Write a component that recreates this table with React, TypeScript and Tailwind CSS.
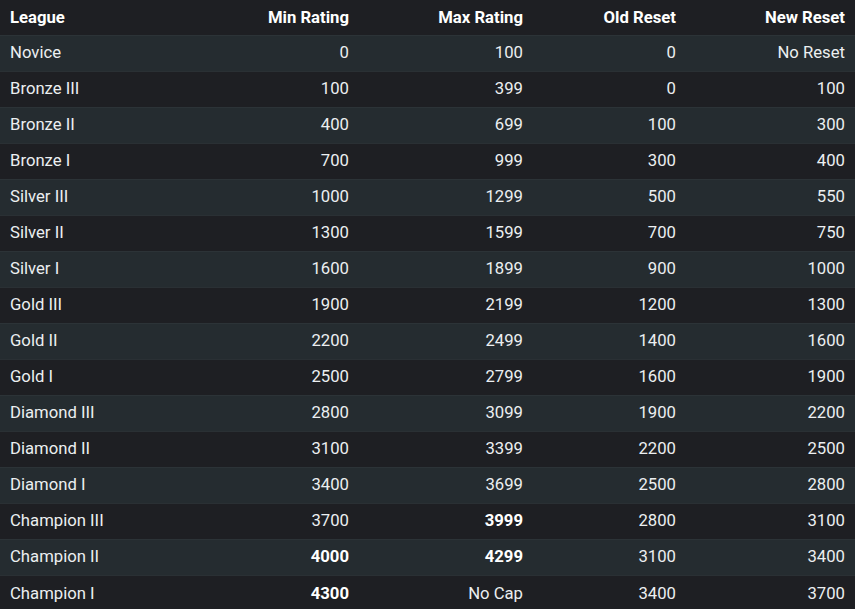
type Row = {
    league: string;
    min: string;
    max: string;
    oldReset: string;
    newReset: string;
    boldMin?: boolean;
    boldMax?: boolean;
};

const rows: Row[] = [
    { league: "Novice", min: "0", max: "100", oldReset: "0", newReset: "No Reset" },
    { league: "Bronze III", min: "100", max: "399", oldReset: "0", newReset: "100" },
    { league: "Bronze II", min: "400", max: "699", oldReset: "100", newReset: "300" },
    { league: "Bronze I", min: "700", max: "999", oldReset: "300", newReset: "400" },
    { league: "Silver III", min: "1000", max: "1299", oldReset: "500", newReset: "550" },
    { league: "Silver II", min: "1300", max: "1599", oldReset: "700", newReset: "750" },
    { league: "Silver I", min: "1600", max: "1899", oldReset: "900", newReset: "1000" },
    { league: "Gold III", min: "1900", max: "2199", oldReset: "1200", newReset: "1300" },
    { league: "Gold II", min: "2200", max: "2499", oldReset: "1400", newReset: "1600" },
    { league: "Gold I", min: "2500", max: "2799", oldReset: "1600", newReset: "1900" },
    { league: "Diamond III", min: "2800", max: "3099", oldReset: "1900", newReset: "2200" },
    { league: "Diamond II", min: "3100", max: "3399", oldReset: "2200", newReset: "2500" },
    { league: "Diamond I", min: "3400", max: "3699", oldReset: "2500", newReset: "2800" },
    { league: "Champion III", min: "3700", max: "3999", oldReset: "2800", newReset: "3100", boldMax: true },
    { league: "Champion II", min: "4000", max: "4299", oldReset: "3100", newReset: "3400", boldMin: true, boldMax: true },
    { league: "Champion I", min: "4300", max: "No Cap", oldReset: "3400", newReset: "3700", boldMin: true },
];

export default function App() {
    return (
        <div className="min-h-screen bg-[#1e1f23] font-['Roboto',sans-serif] text-[16.7px] text-[#eceff1]">
            <table className="w-[855px] table-fixed border-collapse">
                <colgroup>
                    <col className="w-[190px]" />
                    <col className="w-[169px]" />
                    <col className="w-[174px]" />
                    <col className="w-[153px]" />
                    <col className="w-[169px]" />
                </colgroup>
                <thead>
                    <tr className="h-[35px] bg-[#1e1f23] font-bold text-white">
                        <th className="px-[10px] pt-[1px] text-left font-bold">League</th>
                        <th className="px-[10px] pt-[1px] text-right font-bold">Min Rating</th>
                        <th className="px-[10px] pt-[1px] text-right font-bold">Max Rating</th>
                        <th className="px-[10px] pt-[1px] text-right font-bold">Old Reset</th>
                        <th className="px-[10px] pt-[1px] text-right font-bold">New Reset</th>
                    </tr>
                </thead>
                <tbody>
                    {rows.map((row, i) => (
                        <tr
                            key={row.league}
                            className={
                                i % 2 === 0
                                    ? "h-[36px] border-t border-[#2c3337] bg-[#252c30]"
                                    : "h-[36px] border-t border-[#2a3034] bg-[#1e1f23]"
                            }
                        >
                            <td className="px-[10px] text-left">{row.league}</td>
                            <td className={row.boldMin ? "px-[10px] text-right font-bold text-white" : "px-[10px] text-right"}>{row.min}</td>
                            <td className={row.boldMax ? "px-[10px] text-right font-bold text-white" : "px-[10px] text-right"}>{row.max}</td>
                            <td className="px-[10px] text-right">{row.oldReset}</td>
                            <td className="px-[10px] text-right">{row.newReset}</td>
                        </tr>
                    ))}
                </tbody>
            </table>
        </div>
    );
}
